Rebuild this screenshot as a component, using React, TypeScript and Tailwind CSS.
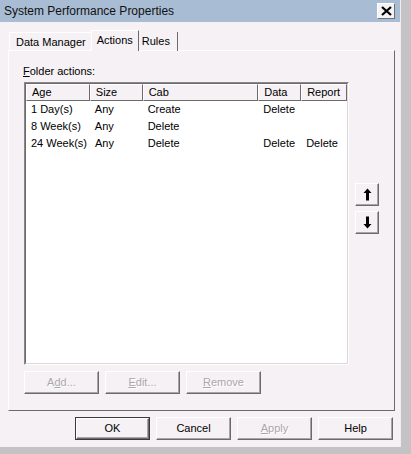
import React from 'react';

const FONT = "font-['Liberation_Sans',Arial,sans-serif]";

const ROWS = [
  { age: '1 Day(s)', size: 'Any', cab: 'Create', data: 'Delete', report: '' },
  { age: '8 Week(s)', size: 'Any', cab: 'Delete', data: '', report: '' },
  { age: '24 Week(s)', size: 'Any', cab: 'Delete', data: 'Delete', report: 'Delete' },
];

const COLS = [
  { key: 'age', label: 'Age', w: 'w-[64px]' },
  { key: 'size', label: 'Size', w: 'w-[53px]' },
  { key: 'cab', label: 'Cab', w: 'w-[116px]' },
  { key: 'data', label: 'Data', w: 'w-[43px]' },
  { key: 'report', label: 'Report', w: 'w-[46px]' },
] as const;

function Btn({ children, disabled, isDefault }: { children: React.ReactNode; disabled?: boolean; isDefault?: boolean }) {
  const inner = (
    <div
      className={`${isDefault ? 'w-[73px] h-[21px]' : 'w-[75px] h-[23px]'} border border-t-white border-l-white border-r-[#6b6b6b] border-b-[#6b6b6b] shadow-[inset_-1px_-1px_0_#a8a4a8]`}
    >
      <div
        className={`h-full flex items-center justify-center text-[11px] ${
          disabled ? 'text-[#aaa7aa] [text-shadow:1px_1px_0_#ffffff]' : 'text-black'
        }`}
      >
        {children}
      </div>
    </div>
  );
  if (isDefault) return <div className="border border-[#3a3a3a]">{inner}</div>;
  return inner;
}

function ArrowBtn({ down }: { down?: boolean }) {
  return (
    <div className="w-[24px] h-[23px] border border-t-white border-l-white border-r-[#6b6b6b] border-b-[#6b6b6b] shadow-[inset_-1px_-1px_0_#a8a4a8] flex items-center justify-center">
      <svg width="9" height="13" viewBox="0 0 9 13" className={down ? 'rotate-180' : ''}>
        <path d="M4.5 0.5 L8.5 5 L6 5 L6 12.5 L3 12.5 L3 5 L0.5 5 Z" fill="#000" />
      </svg>
    </div>
  );
}

export default function App() {
  return (
    <div className={`w-[411px] h-[454px] bg-[#c4c2c4] ${FONT} text-black`}>
      <div className="w-[401px] h-[447px] bg-[#f5f1f4] border-r border-r-[#f0ecef] flex flex-col">
        {/* Title bar */}
        <div className="h-[22px] bg-[#a8bcd4] flex items-center justify-between pl-[4px] pr-[5px]">
          <span className="text-[12px] text-[#111]">System Performance Properties</span>
          <div className="w-[18px] h-[16px] bg-[#f3f3f6] border border-t-white border-l-white border-r-[#707070] border-b-[#707070] flex items-center justify-center">
            <svg width="11" height="10" viewBox="0 0 11 10">
              <path d="M1 1 L10 9 M10 1 L1 9" stroke="#000" strokeWidth="2.2" />
            </svg>
          </div>
        </div>

        {/* Tabs */}
        <div className="pl-[9px] pt-[9px] flex items-end h-[28px] relative z-10">
          <div className="h-[19px] px-[6px] flex items-center border-l border-t border-l-white border-t-white text-[11px] mb-[-1px]">
            Data Manager
          </div>
          <div className="h-[21px] px-[5px] flex items-center bg-[#f5f1f4] border-l border-t border-r border-l-white border-t-white border-r-[#6b6b6b] text-[11px] mb-[-1px] -mx-[1px] pb-[2px]">
            Actions
          </div>
          <div className="h-[19px] px-[4px] w-[40px] flex items-center border-r border-r-[#6b6b6b] text-[11px] mb-[-1px]">
            Rules
          </div>
        </div>

        {/* Panel */}
        <div className="ml-[8px] w-[387px] h-[361px] border border-t-white border-l-white border-r-[#6b6b6b] border-b-[#6b6b6b] pt-[13px] pl-[14px] flex flex-col">
          <div className="text-[11px] h-[14px] leading-[14px]">
            <span className="underline">F</span>older actions:
          </div>
          <div className="flex mt-[4px]">
            <div className="ml-[1px] w-[325px] h-[283px] border border-t-[#8a878a] border-l-[#8a878a] border-r-[#fefefe] border-b-[#fefefe] bg-white">
              <div className="w-full h-full border border-t-[#6b6b6b] border-l-[#6b6b6b] border-r-[#dcd8db] border-b-[#dcd8db]">
                <div className="flex h-[17px] bg-[#f5f1f4]">
                  {COLS.map(c => (
                    <div
                      key={c.key}
                      className={`${c.w} h-full border border-t-white border-l-white border-r-[#6b6b6b] border-b-[#6b6b6b] px-[5px] text-[11px] flex items-center`}
                    >
                      {c.label}
                    </div>
                  ))}
                </div>
                {ROWS.map(r => (
                  <div key={r.age} className="flex h-[17px] text-[11px] items-center">
                    {COLS.map(c => (
                      <div key={c.key} className={`${c.w} px-[5px] whitespace-nowrap`}>
                        {r[c.key]}
                      </div>
                    ))}
                  </div>
                ))}
              </div>
            </div>
            <div className="ml-[6px] mt-[101px] flex flex-col gap-[5px]">
              <ArrowBtn />
              <ArrowBtn down />
            </div>
          </div>
          <div className="flex gap-[6px] mt-[6px] ml-[1px]">
            <Btn disabled>
              A<span className="underline">d</span>d...
            </Btn>
            <Btn disabled>
              <span className="underline">E</span>dit...
            </Btn>
            <Btn disabled>
              <span className="underline">R</span>emove
            </Btn>
          </div>
        </div>

        {/* Dialog buttons */}
        <div className="flex justify-end gap-[6px] pr-[7px] mt-[6px]">
          <Btn isDefault>OK</Btn>
          <Btn>Cancel</Btn>
          <Btn disabled>
            <span className="underline">A</span>pply
          </Btn>
          <Btn>Help</Btn>
        </div>
      </div>
    </div>
  );
}
